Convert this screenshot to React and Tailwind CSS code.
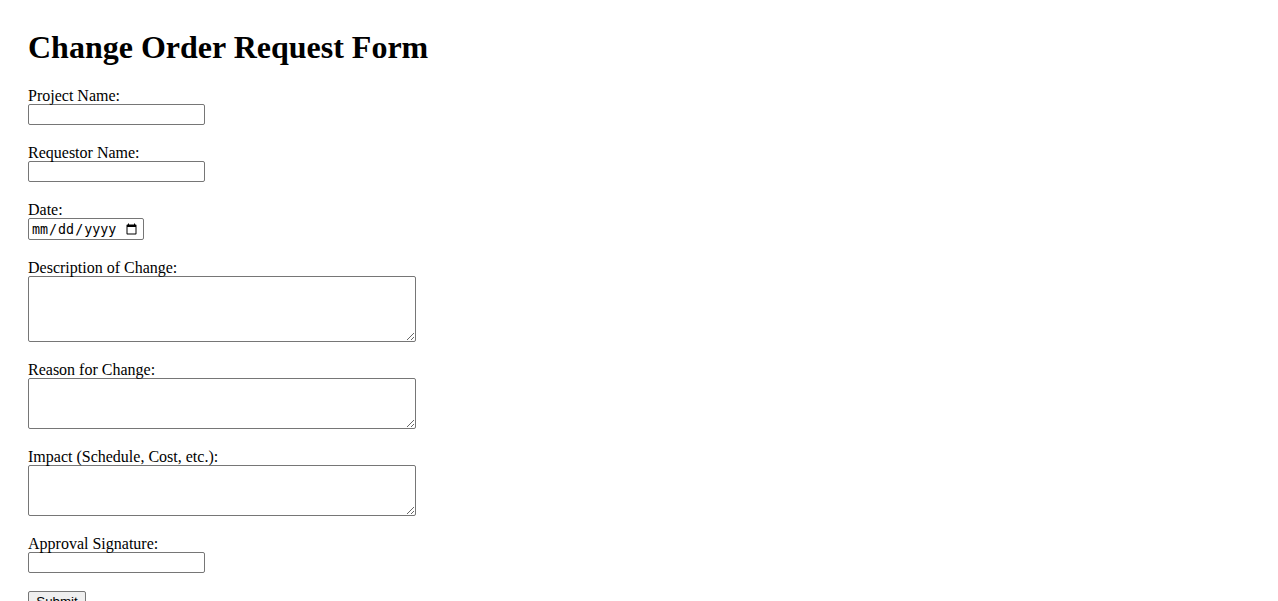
import React from "react";

const serif = "font-['Liberation_Serif','Times_New_Roman',serif]";
const inputCls =
  "block w-[177px] h-[21px] border border-[#767676] rounded-[2px] bg-white px-[2px] py-[1px] text-[13.33px] font-['Liberation_Sans',Arial,sans-serif] text-black outline-none mb-[18px]";
const areaCls =
  "block w-[388px] border border-[#767676] rounded-[2px] bg-white p-[2px] text-[13.33px] leading-[15px] font-['Liberation_Mono','Courier_New',monospace] text-black outline-none mb-[18px] resize";

function Label({ children, htmlFor }) {
  return (
    <label
      htmlFor={htmlFor}
      className={`block h-[18px] pt-[1px] text-[16px] leading-[18px] text-black whitespace-nowrap ${serif}`}
    >
      {children}
    </label>
  );
}

export default function App() {
  return (
    <div className={`min-h-[601px] bg-white pl-[28px] pt-[29px] text-black ${serif}`}>
      <h1 className="text-[32px] leading-[37px] font-bold mb-[20px]">Change Order Request Form</h1>
      <form onSubmit={(e) => e.preventDefault()}>
        <Label htmlFor="project">Project Name:</Label>
        <input id="project" type="text" className={inputCls} />

        <Label htmlFor="requestor">Requestor Name:</Label>
        <input id="requestor" type="text" className={inputCls} />

        <Label htmlFor="date">Date:</Label>
        <input
          id="date"
          type="date"
          className="block w-[116px] h-[22px] border border-[#767676] rounded-[2px] bg-white pl-[2px] pr-[3px] pt-[2px] pb-0 text-[13.33px] font-['DejaVu_Sans_Mono','Liberation_Mono',monospace] text-black outline-none mb-[18px]"
        />

        <Label htmlFor="desc">Description of Change:</Label>
        <textarea id="desc" rows={4} className={`${areaCls} h-[66px]`} />

        <Label htmlFor="reason">Reason for Change:</Label>
        <textarea id="reason" rows={3} className={`${areaCls} h-[51px]`} />

        <Label htmlFor="impact">Impact (Schedule, Cost, etc.):</Label>
        <textarea id="impact" rows={3} className={`${areaCls} h-[51px]`} />

        <Label htmlFor="sig">Approval Signature:</Label>
        <input id="sig" type="text" className={inputCls} />

        <button
          type="submit"
          className="block w-[58px] h-[21px] border border-[#767676] rounded-[2px] bg-[#efefef] px-[6px] py-[1px] text-[13.33px] leading-[17px] font-['Liberation_Sans',Arial,sans-serif] text-black"
        >
          Submit
        </button>
      </form>
    </div>
  );
}
